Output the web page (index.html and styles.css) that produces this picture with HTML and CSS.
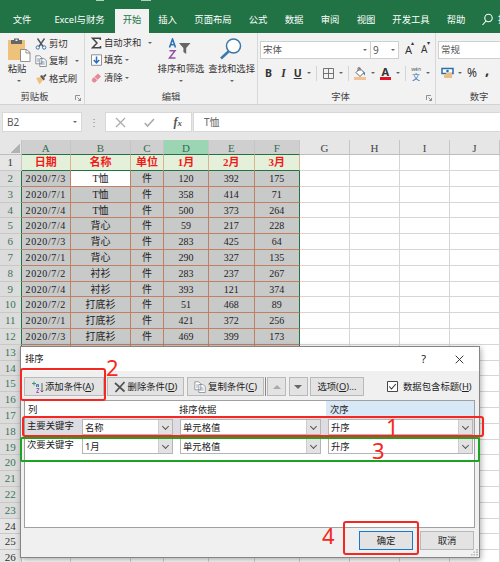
FILE: index.html
```html
<!DOCTYPE html>
<html lang="zh-CN">
<head>
<meta charset="utf-8">
<title>排序</title>
<link rel="stylesheet" href="styles.css">
</head>
<body>
<div class="app">
<nav class="tabs">
  <span class="t44">文件</span><span class="t71">Excel与财务</span><span class="t34 active">开始</span><span class="t37">插入</span><span class="t54">页面布局</span><span class="t36">公式</span><span class="t36">数据</span><span class="t36">审阅</span><span class="t36">视图</span><span class="t54">开发工具</span><span class="t36">帮助</span>
  <svg class="search" width="14" height="14" viewBox="0 0 14 14" fill="none" stroke="#fff" stroke-width="1.1"><circle cx="7.5" cy="5" r="3.7"/><path d="M5 8 1.5 12"/></svg><span class="more">操</span>
  <i class="qat q1"></i><i class="qat q2"></i>
</nav>
<div class="ribbon">
  <section class="group clipboard">
    <div class="body">
      <div class="paste">
        <svg width="24" height="26" viewBox="0 0 24 26"><path fill="#efc27c" d="M1 3h17v20H1z"/><path fill="#666" d="M4 3h3V1.500h5V3h3v4H4z"/><path fill="#f3f2f2" d="M8.500 2.500h2v1.500h-2z"/><path fill="#fff" stroke="#777" stroke-width=".8" d="M13.500 12.500h6l3.500 3v9h-9.500z"/><path fill="none" stroke="#777" stroke-width=".8" d="M19 12.500v3.500h4"/></svg>
        <span>粘贴</span><i class="dd"></i>
      </div>
      <div class="list">
        <div><svg width="12" height="12" viewBox="0 0 12 12" fill="none"><path stroke="#555" stroke-width="1.400" d="M2.500.5l5.500 8M9.500.5 4 8.500"/><circle cx="2.800" cy="9.500" r="1.700" stroke="#3a78b5"/><circle cx="9.200" cy="9.500" r="1.700" stroke="#3a78b5"/></svg>剪切</div>
        <div><svg width="12" height="12" viewBox="0 0 12 12" fill="#fff" stroke="#777" stroke-width=".8"><path d="M.8.8h4l2 2v6h-6zM4.800 3.500h4l2.500 2v6H4.800z"/><path stroke="#4a82bd" d="M2 4h2M2 6h2M6.200 7h3.500M6.200 9h3.500"/></svg>复制<i class="dd gap"></i></div>
        <div><svg width="12" height="12" viewBox="0 0 12 12"><path fill="#efc27c" d="M1 5l5-1 2 3-3.500 4.500z"/><path fill="#555" d="M5 3l2-1 3 4-1.500 1.500zM8 3l2.500-2 1 1L9.500 4.500z"/></svg>格式刷</div>
      </div>
    </div>
    <footer>剪贴板<svg class="launch" width="6" height="6" viewBox="0 0 6 6" fill="none" stroke="#777" stroke-width=".8"><path d="M.5 5V.5H5M2.500 2.500l3 3M5.500 3v2.500H3"/></svg></footer>
  </section>
  <section class="group edit">
    <div class="body">
      <div class="list">
        <div><svg width="11" height="12" viewBox="0 0 11 12" fill="none" stroke="#444" stroke-width="1.500"><path d="M9.300 3V1.200H1.500L6 6 1.500 10.800h8V9"/></svg>自动求和<i class="dd gap"></i></div>
        <div><svg width="11" height="12" viewBox="0 0 11 12" fill="#fff" stroke="#777" stroke-width=".8"><path d="M.5.8h10v10.500H.5z"/><path fill="none" stroke="#2a6fba" stroke-width="1.500" d="M5.500 2.500v6.500M2.800 6l2.700 3 2.700-3"/></svg>填充<i class="dd"></i></div>
        <div><svg width="11" height="12" viewBox="0 0 11 12"><path fill="#e58a98" d="M1 7l6-5.500 3 3L4 10.500H2.500L.8 9z"/><path stroke="#fff" stroke-width=".7" d="M3.500 5l3 3"/></svg>清除<i class="dd"></i></div>
      </div>
      <div class="big sort">
        <svg width="23" height="22" viewBox="0 0 23 22" fill="none"><path stroke="#2e75b6" stroke-width="1.600" d="M1.500 9.500 4.500 1l3 8.500M2.500 6.800h4"/><path stroke="#9350a8" stroke-width="1.500" d="M1.500 12.700h5.500L1.500 20h6"/><path fill="#666" d="M11 5h11.500l-4.300 5v6l-2.800-2v-4z"/></svg>
        <span>排序和筛选</span><i class="dd"></i>
      </div>
      <div class="big find">
        <svg width="23" height="22" viewBox="0 0 23 22" fill="none" stroke="#3a78a9"><circle cx="14.500" cy="8" r="7" fill="#fff" stroke-width="1.500"/><path stroke-width="2.500" d="M9.500 13.500 2 20.500"/></svg>
        <span>查找和选择</span><i class="dd"></i>
      </div>
    </div>
    <footer>编辑</footer>
  </section>
  <section class="group font">
    <div class="body">
      <div class="pick"><span class="box fname">宋体<i class="dd"></i></span><span class="box fsize">9<i class="dd"></i></span><span class="grow">A<sup>▴</sup></span><span class="grow small">A<sup>▾</sup></span></div>
      <div class="tools">
        <b>B</b><em>I</em><u>U</u><i class="dd d1"></i><i class="sep"></i>
        <svg width="11" height="11" viewBox="0 0 11 11" fill="none" stroke="#666" stroke-width=".9"><path d="M.5.5h10v10H.5zM5.500.5v10M.5 5.500h10"/></svg><i class="dd"></i><i class="sep"></i>
        <svg width="12" height="13" viewBox="0 0 12 13"><path fill="#fff" stroke="#555" stroke-width=".9" d="M2 5.500 6 1.500l4 4-4 4z"/><path fill="none" stroke="#555" stroke-width=".8" d="M4 4V.8h2V4"/><path fill="#2e75b6" d="M9.500 4q2 2 1.500 4.500L9.500 7z"/><path fill="#f4c095" d="M0 10h12v3H0z"/></svg><i class="dd"></i>
        <span class="color">A</span><i class="dd"></i><i class="sep"></i>
        <span class="wen"><small>wén</small>文</span><i class="dd"></i>
      </div>
    </div>
    <footer>字体<svg class="launch" width="6" height="6" viewBox="0 0 6 6" fill="none" stroke="#777" stroke-width=".8"><path d="M.5 5V.5H5M2.500 2.500l3 3M5.500 3v2.500H3"/></svg></footer>
  </section>
  <section class="group number">
    <div class="body">
      <div class="pick"><span class="box fmt">常规</span></div>
      <div class="tools"><svg width="13" height="12" viewBox="0 0 13 12"><path fill="#fff" stroke="#2e6ca5" stroke-width="1.500" d="M1 1.500h11v5H1z"/><circle cx="6.500" cy="4" r="1.300" fill="#2e6ca5"/><path fill="#eebd82" d="M5 6h6v5H5zM3 8h4v3H3z"/></svg><i class="dd"></i><span class="pct">%</span><span class="comma">,</span><i class="sep"></i></div>
    </div>
    <footer>数字</footer>
  </section>
</div>
<div class="formula">
  <div class="name">B2<i class="dd"></i></div><div class="dots">⋮</div>
  <div class="fx"><svg width="11" height="11" viewBox="0 0 11 11" fill="none" stroke="#aaa" stroke-width="1.200"><path d="M1 1l9 9M10 1 1 10"/></svg><svg width="11" height="11" viewBox="0 0 11 11" fill="none" stroke="#aaa" stroke-width="1.600"><path d="M.8 6 3.500 9 10 2"/></svg><em>f<small>x</small></em></div>
  <div class="value">T恤</div>
</div>
<main class="sheet">
  <div class="row cols"><span class="corner"></span><span class="on">A</span><span class="on">B</span><span class="on">C</span><span class="on cur">D</span><span class="on">E</span><span class="on">F</span><span>G</span><span>H</span><span>I</span><span>J</span></div>
  <div class="row head"><b>1</b><span>日期</span><span>名称</span><span>单位</span><span>1月</span><span>2月</span><span>3月</span><i></i><i></i><i></i><i></i></div>
  <div class="row sel"><b>2</b><span>2020/7/3</span><span class="white">T恤</span><span>件</span><span>120</span><span>392</span><span>175</span><i></i><i></i><i></i><i></i></div>
  <div class="row sel"><b>3</b><span>2020/7/1</span><span>T恤</span><span>件</span><span>358</span><span>414</span><span>71</span><i></i><i></i><i></i><i></i></div>
  <div class="row sel"><b>4</b><span>2020/7/4</span><span>T恤</span><span>件</span><span>500</span><span>373</span><span>264</span><i></i><i></i><i></i><i></i></div>
  <div class="row sel"><b>5</b><span>2020/7/4</span><span>背心</span><span>件</span><span>59</span><span>217</span><span>228</span><i></i><i></i><i></i><i></i></div>
  <div class="row sel"><b>6</b><span>2020/7/3</span><span>背心</span><span>件</span><span>283</span><span>425</span><span>64</span><i></i><i></i><i></i><i></i></div>
  <div class="row sel"><b>7</b><span>2020/7/1</span><span>背心</span><span>件</span><span>290</span><span>327</span><span>135</span><i></i><i></i><i></i><i></i></div>
  <div class="row sel"><b>8</b><span>2020/7/2</span><span>衬衫</span><span>件</span><span>283</span><span>237</span><span>267</span><i></i><i></i><i></i><i></i></div>
  <div class="row sel"><b>9</b><span>2020/7/4</span><span>衬衫</span><span>件</span><span>393</span><span>121</span><span>374</span><i></i><i></i><i></i><i></i></div>
  <div class="row sel"><b>10</b><span>2020/7/2</span><span>打底衫</span><span>件</span><span>51</span><span>468</span><span>89</span><i></i><i></i><i></i><i></i></div>
  <div class="row sel"><b>11</b><span>2020/7/1</span><span>打底衫</span><span>件</span><span>421</span><span>372</span><span>256</span><i></i><i></i><i></i><i></i></div>
  <div class="row sel"><b>12</b><span>2020/7/3</span><span>打底衫</span><span>件</span><span>469</span><span>399</span><span>173</span><i></i><i></i><i></i><i></i></div>
  <div class="row sel"><b>13</b><span></span><span></span><span></span><span></span><span></span><span></span><i></i><i></i><i></i><i></i></div>
  <div class="row sel"><b>14</b><span></span><span></span><span></span><span></span><span></span><span></span><i></i><i></i><i></i><i></i></div>
  <div class="row sel"><b>15</b><span></span><span></span><span></span><span></span><span></span><span></span><i></i><i></i><i></i><i></i></div>
  <div class="row sel"><b>16</b><span></span><span></span><span></span><span></span><span></span><span></span><i></i><i></i><i></i><i></i></div>
  <div class="row sel"><b>17</b><span></span><span></span><span></span><span></span><span></span><span></span><i></i><i></i><i></i><i></i></div>
  <div class="row sel"><b>18</b><span></span><span></span><span></span><span></span><span></span><span></span><i></i><i></i><i></i><i></i></div>
  <div class="row sel"><b>19</b><span></span><span></span><span></span><span></span><span></span><span></span><i></i><i></i><i></i><i></i></div>
  <div class="row sel"><b>20</b><span></span><span></span><span></span><span></span><span></span><span></span><i></i><i></i><i></i><i></i></div>
  <div class="row sel"><b>21</b><span></span><span></span><span></span><span></span><span></span><span></span><i></i><i></i><i></i><i></i></div>
  <div class="row sel"><b>22</b><span></span><span></span><span></span><span></span><span></span><span></span><i></i><i></i><i></i><i></i></div>
  <div class="row sel"><b>23</b><span></span><span></span><span></span><span></span><span></span><span></span><i></i><i></i><i></i><i></i></div>
  <div class="row"><b>24</b><i></i><i></i><i></i><i></i><i></i><i></i><i></i><i></i><i></i><i></i></div>
  <div class="row"><b>25</b><i></i><i></i><i></i><i></i><i></i><i></i><i></i><i></i><i></i><i></i></div>
  <div class="row"><b>26</b><i></i><i></i><i></i><i></i><i></i><i></i><i></i><i></i><i></i><i></i></div>
</main>

<div class="dialog">
  <header><span>排序</span><span class="help">?</span><svg width="9" height="9" viewBox="0 0 9 9" stroke="#222" stroke-width=".9"><path d="M.7.7l7.600 7.600M8.300.7.7 8.300"/></svg></header>
  <div class="bar">
    <button class="w79"><svg width="12" height="12" viewBox="0 0 12 12" fill="none"><path stroke="#3a9a68" d="M0 2.500h4M2 .5v4"/><path stroke="#3a70b5" stroke-width=".9" d="M4.500 6V3.500h2V6M4.500 5h2"/><path stroke="#9350a8" stroke-width=".9" d="M4.500 7.500h2.500l-2.500 4H7"/><path stroke="#555" stroke-width=".9" d="M10 2v9M8.500 9.500 10 11l1.500-1.500"/></svg><span>添加条件(<u>A</u>)</span></button>
    <button class="w77"><svg width="12" height="12" viewBox="0 0 12 12" stroke="#555" stroke-width="1.800"><path d="M1 2l9.500 8.500M10.500 1 1.500 11"/></svg><span>删除条件(<u>D</u>)</span></button>
    <button class="w77"><svg width="12" height="12" viewBox="0 0 12 12" fill="#fff" stroke="#888" stroke-width=".8"><path d="M.8.8h4l2 2v6h-6zM4.800 3.500h4l2.500 2v6H4.800z"/><path stroke="#7a9bc5" d="M2 4h2M2 6h2M6.200 7h3.500M6.200 9h3.500"/></svg><span>复制条件(<u>C</u>)</span></button>
    <i class="split"></i>
    <button class="w19"><i class="up"></i></button><button class="w19"><i class="down"></i></button>
    <button class="w54"><span>选项(<u>O</u>)...</span></button>
    <label><svg width="11" height="11" viewBox="0 0 11 11" fill="#fff" stroke="#333" stroke-width=".9"><path d="M.5.5h10v10H.5z"/><path fill="none" stroke-width="1.100" d="M2.300 5.500 4.500 8l4.300-5"/></svg>数据包含标题(<u>H</u>)</label>
  </div>
  <div class="levels">
    <div class="lv th"><span>列</span><span></span><span>排序依据</span><span class="hot">次序</span></div>
    <div class="lv chosen"><span>主要关键字</span><span class="combo c1">名称<i></i></span><span class="combo c2">单元格值<i></i></span><span class="combo c3">升序<i></i></span></div>
    <div class="lv"><span>次要关键字</span><span class="combo c1">1月<i></i></span><span class="combo c2">单元格值<i></i></span><span class="combo c3">升序<i></i></span></div>
  </div>
  <div class="actions"><button class="ok">确定</button><button>取消</button></div>
  <svg class="grip" width="8" height="7" viewBox="0 0 8 7" fill="#bbb"><path d="M5 0h2v1.500H5zM5 2.500h2V4H5zM5 5h2v1.500H5zM2.500 2.500h1.500V4H2.500zM2.500 5h1.500v1.500H2.500zM0 5h1.500v1.500H0z"/></svg>
</div>
<div class="mark m2"></div><div class="mark m1"></div><div class="mark m3"></div><div class="mark m4"></div>
<span class="num n1">1</span><span class="num n2">2</span><span class="num n3">3</span><span class="num n4">4</span>
</div>
</body>
</html>
```
FILE: styles.css
```css
* { box-sizing: border-box; }
body { margin: 0; }
.app {
  position: relative; width: 500px; height: 562px; overflow: hidden; background: #e6e6e6;
  font: 9.35px/12px "Noto Sans", "Noto Sans CJK SC", sans-serif; color: #333;
}
svg { flex: none; display: block; }
i, em { font-style: normal; }
.dd { flex: none; border: 2px solid transparent; border-top-color: #666; border-bottom: 0; width: 4px; height: 2px; }

.tabs { position: relative; display: flex; height: 33px; padding-top: 9px; background: #217346; color: #fff; overflow: hidden; }
.tabs span { flex: none; height: 24px; line-height: 22px; text-align: center; white-space: nowrap; }
.t34 { width: 34px; } .t36 { width: 36px; } .t37 { width: 37px; } .t44 { width: 44px; }
.t54 { width: 54px; } .t71 { width: 71px; }
.tabs .active { background: #f3f2f2; color: #217346; }
.search { margin: 4px 0 0 7px; }
.tabs .more { margin-left: 3px; }
.qat { position: absolute; top: 0; height: 1px; background: #b5d0c0; }
.q1 { left: 96px; width: 8px; } .q2 { left: 141px; width: 10px; }

.ribbon { display: flex; height: 72px; background: #f3f2f2; border-bottom: 1px solid #d2d2d2; }
.group { flex: none; display: flex; flex-direction: column; border-right: 1px solid #d8d8d8; }
.group .body { display: flex; height: 57px; }
.group footer { position: relative; height: 14px; line-height: 13px; text-align: center; color: #444; }
.launch { position: absolute; right: 3px; bottom: 3px; }
.clipboard { width: 85px; } .clipboard footer { padding-right: 15px; }
.edit { width: 173px; }
.font { width: 178px; } .font .body, .number .body { flex-direction: column; }
.font footer { padding-right: 12px; }
.number { width: 64px; border: 0; } .number footer { padding-left: 22px; }
.paste { display: flex; flex-direction: column; align-items: center; width: 34px; padding-top: 4px; }
.paste svg { margin-left: 4px; }
.paste .dd { margin: 5px 0 0 3px; }
.list { display: flex; flex-direction: column; padding-top: 2px; }
.list div { display: flex; align-items: center; height: 17.5px; white-space: nowrap; }
.list svg { margin: 0 2px 0 1px; }
.list .dd { margin-left: 2px; } .list .dd.gap { margin-left: 7px; }
.edit .list { width: 71px; padding: 1px 0 0 5px; }
.big { display: flex; flex-direction: column; align-items: center; width: 51px; padding-top: 5px; white-space: nowrap; }
.big span { margin-top: 3px; } .big .dd { margin-top: 5px; }
.big svg { margin-left: -2px; }
.pick { display: flex; height: 25px; padding: 8px 0 0 2px; }
.box { display: flex; align-items: center; justify-content: space-between; height: 18px; padding: 0 3px 0 2px; background: #fff; border: 1px solid #cfcfcf; color: #555; font-size: 9.5px; }
.fname { width: 111px; } .fsize { width: 29px; margin-left: -1px; font-size: 10px; } .fmt { width: 70px; flex: none; }
.number { overflow: hidden; }
.grow { position: relative; margin-left: 6px; font-size: 11px; line-height: 17px; width: 10px; }
.grow.small { font-size: 10px; }
.grow sup { position: absolute; left: 6px; top: -3px; font-size: 6px; line-height: 10px; }
.tools { display: flex; align-items: center; height: 16px; margin-top: 7px; padding-left: 7px; }
.tools b { width: 16px; font-size: 10.5px; }
.tools em { width: 16px; font: italic bold 11.5px "Liberation Serif", serif; padding-left: 2px; }
.tools u { width: 13px; font-size: 10.5px; font-weight: bold; }
.tools .dd { margin: 0 5px 0 5px; } .tools .d1 { margin-left: 1px; }
.sep { width: 1px; height: 15px; background: #d5d5d5; margin: 0 5px 0 0; }
.font .d1 { margin-left: 2px; }
.font .sep { margin-right: 5.5px; }
.color { width: 12px; height: 13px; margin-left: 0; border-bottom: 3px solid #e81123; text-align: center; font: bold 11px/10px "Noto Sans", sans-serif; }
.wen { width: 11px; height: 15px; font-size: 8px; line-height: 8px; color: #2e75b6; text-align: center; }
.wen small { display: block; height: 7px; color: #555; font-size: 5px; line-height: 6px; }
.number .tools { padding-left: 5px; }
.number .tools .dd { margin: 0 5px 0 4px; }
.pct { font-size: 12px; } .comma { font: bold 15px/4px "Noto Sans", sans-serif; margin: -8px 8px 0 8px; }

.formula { display: flex; height: 35px; padding: 7px 0 8px 2px; font-size: 10px; }
.formula > div { display: flex; align-items: center; height: 20px; background: #fff; border: 1px solid #d8d8d8; }
.formula .name { width: 80px; justify-content: space-between; padding: 0 4px; color: #555; }
.formula .dots { width: 23px; justify-content: center; background: none; border: 0; color: #888; }
.formula .fx { width: 87px; padding: 0 9px; justify-content: space-between; }
.fx em { font: italic bold 12px "Liberation Serif", serif; color: #555; } .fx small { font-size: 9px; }
.formula .value { flex: 1; margin-left: 1px; padding-left: 10px; color: #666; border-right: 0; }

.sheet { font: 10px/15px "Liberation Serif", "Noto Sans CJK SC", serif; color: #222; }
.row { display: grid; grid-template-columns: 21.5px 49.5px 60px 33px 45px 45.5px 45.5px 50px 50px 50px 50px; height: 15.8px; }
.row > * { border-right: 1px solid #d6d6d6; border-bottom: 1px solid #d6d6d6; background: #fff; text-align: center; overflow: hidden; white-space: nowrap; }
.row > b { background: #e6e6e6; font-weight: normal; font-size: 11px; line-height: 14px; border-color: #c8c8c8; color: #333; }
.sel > b { background: #dcdcdc; color: #3c7458; border-right: 1px solid #217346; }
.sel > span { background: #c8c9c9; border-color: #c18062; }
.sel > span:nth-child(2) { letter-spacing: .6px; }
.sel > span:nth-child(7) { border-right: 1.500px solid #217346; }
.sel > .white { background: #fff; }
.head > span { background: #e5f0db; border-color: #d6b592; border-bottom-color: #217346; color: #f11a17; font-size: 11px; font-weight: bold; }
.sheet .cols { height: 15.3px; }
.cols > span { background: #e6e6e6; border-color: #bdbdbd; border-right-color: #c5c5c5; font-size: 11px; line-height: 17px; color: #444; }
.cols > .on { background: #cfcfcf; border-bottom: 1px solid #217346; color: #376d51; }
.cols > .cur { background: #9bd5b4; }
.cols > .corner { background: linear-gradient(135deg, transparent 50%, #b2b2b2 51%) 10px 3px / 10px 10px no-repeat #e6e6e6; }

.dialog { position: absolute; left: 20px; top: 346px; width: 460px; height: 212px; background: #f0f0f0; border: 1px solid #858585; box-shadow: 1px 2px 6px #0005; color: #222; }
.dialog header { display: flex; align-items: center; height: 24px; padding: 0 15px 0 4px; background: #fff; }
.dialog header .help { margin: 0 29px 0 auto; font-size: 11px; }
.dialog button { display: flex; flex: none; align-items: center; justify-content: center; height: 19px; padding: 0; background: #e3e3e3; border: 1px solid #b9b9b9; font: inherit; color: inherit; white-space: nowrap; }
.bar { display: flex; align-items: center; height: 19px; margin: 6px 0 0 3px; }
.bar svg { margin-right: 2px; }
.bar .w79 svg { margin: 0 1px 0 -2px; }
.w79 { width: 80px; margin-right: 3px; } .w77 { width: 77px; margin-right: 3px; }
.w19 { width: 19px; margin-right: 2.5px; } .w54 { width: 54px; }
.split { width: 1px; height: 19px; background: #888; margin: 0 1px 0 -2px; }
.up, .down { border: 4px solid transparent; border-top: 0; border-bottom: 4px solid #aaa; }
.down { border-bottom: 0; border-top: 4px solid #666; }
.bar label { display: flex; align-items: center; margin-left: 23px; white-space: nowrap; } .bar label svg { margin-right: 5px; }
.levels { height: 128px; margin: 4px 4px 0 3px; background: #fff; border: 1px solid #a0a0a0; }
.lv { display: grid; grid-template-columns: 56px 98px 148px 1fr; align-items: start; height: 19px; padding: 2px 1px; }
.lv > span:first-child { padding: 1px 0 0 1px; white-space: nowrap; }
.th { height: 16px; padding: 0; } .th span { line-height: 17px; height: 16px; }
.lv.th > span:first-child { padding: 0 0 0 3px; }
.lv .hot { background: #d9e8f6; margin-left: -1px; padding-left: 4px; }
.chosen { background: #dcdce2; }
.combo { display: flex; justify-content: space-between; height: 16px; padding-left: 2px; line-height: 15px; background: #fff; border: 1px solid #b5b5b5; }
.c1 { width: 91px; } .c2 { width: 141px; } .c3 { width: 145px; }
.combo i { width: 14px; background: #e2e2e2; border-left: 1px solid #ccc; }
.combo i::after { content: ""; display: block; width: 4px; height: 4px; margin: 4px auto; border: solid #555; border-width: 0 1px 1px 0; transform: rotate(45deg); }
.actions { display: flex; gap: 7px; justify-content: flex-end; padding: 3px 5px 0 0; }
.actions button { width: 54px; }
.dialog .actions .ok { border: 1.500px solid #1579d0; }
.grip { position: absolute; right: 0; bottom: 1px; }
.mark { position: absolute; border: 2px solid #f52721; border-radius: 3px; }
.m1 { left: 22px; top: 416px; width: 462px; height: 21px; }
.m2 { left: 20px; top: 368px; width: 86px; height: 33px; }
.m3 { left: 20px; top: 437px; width: 460px; height: 25px; border-color: #1ba321; border-radius: 2px; }
.m4 { left: 343px; top: 521px; width: 76px; height: 34px; }
.num { position: absolute; color: #f52721; font-size: 22px; line-height: 22px; }
.n1 { left: 386px; top: 415px; } .n2 { left: 106px; top: 356px; }
.n3 { left: 372px; top: 439px; } .n4 { left: 322px; top: 524px; }
```
